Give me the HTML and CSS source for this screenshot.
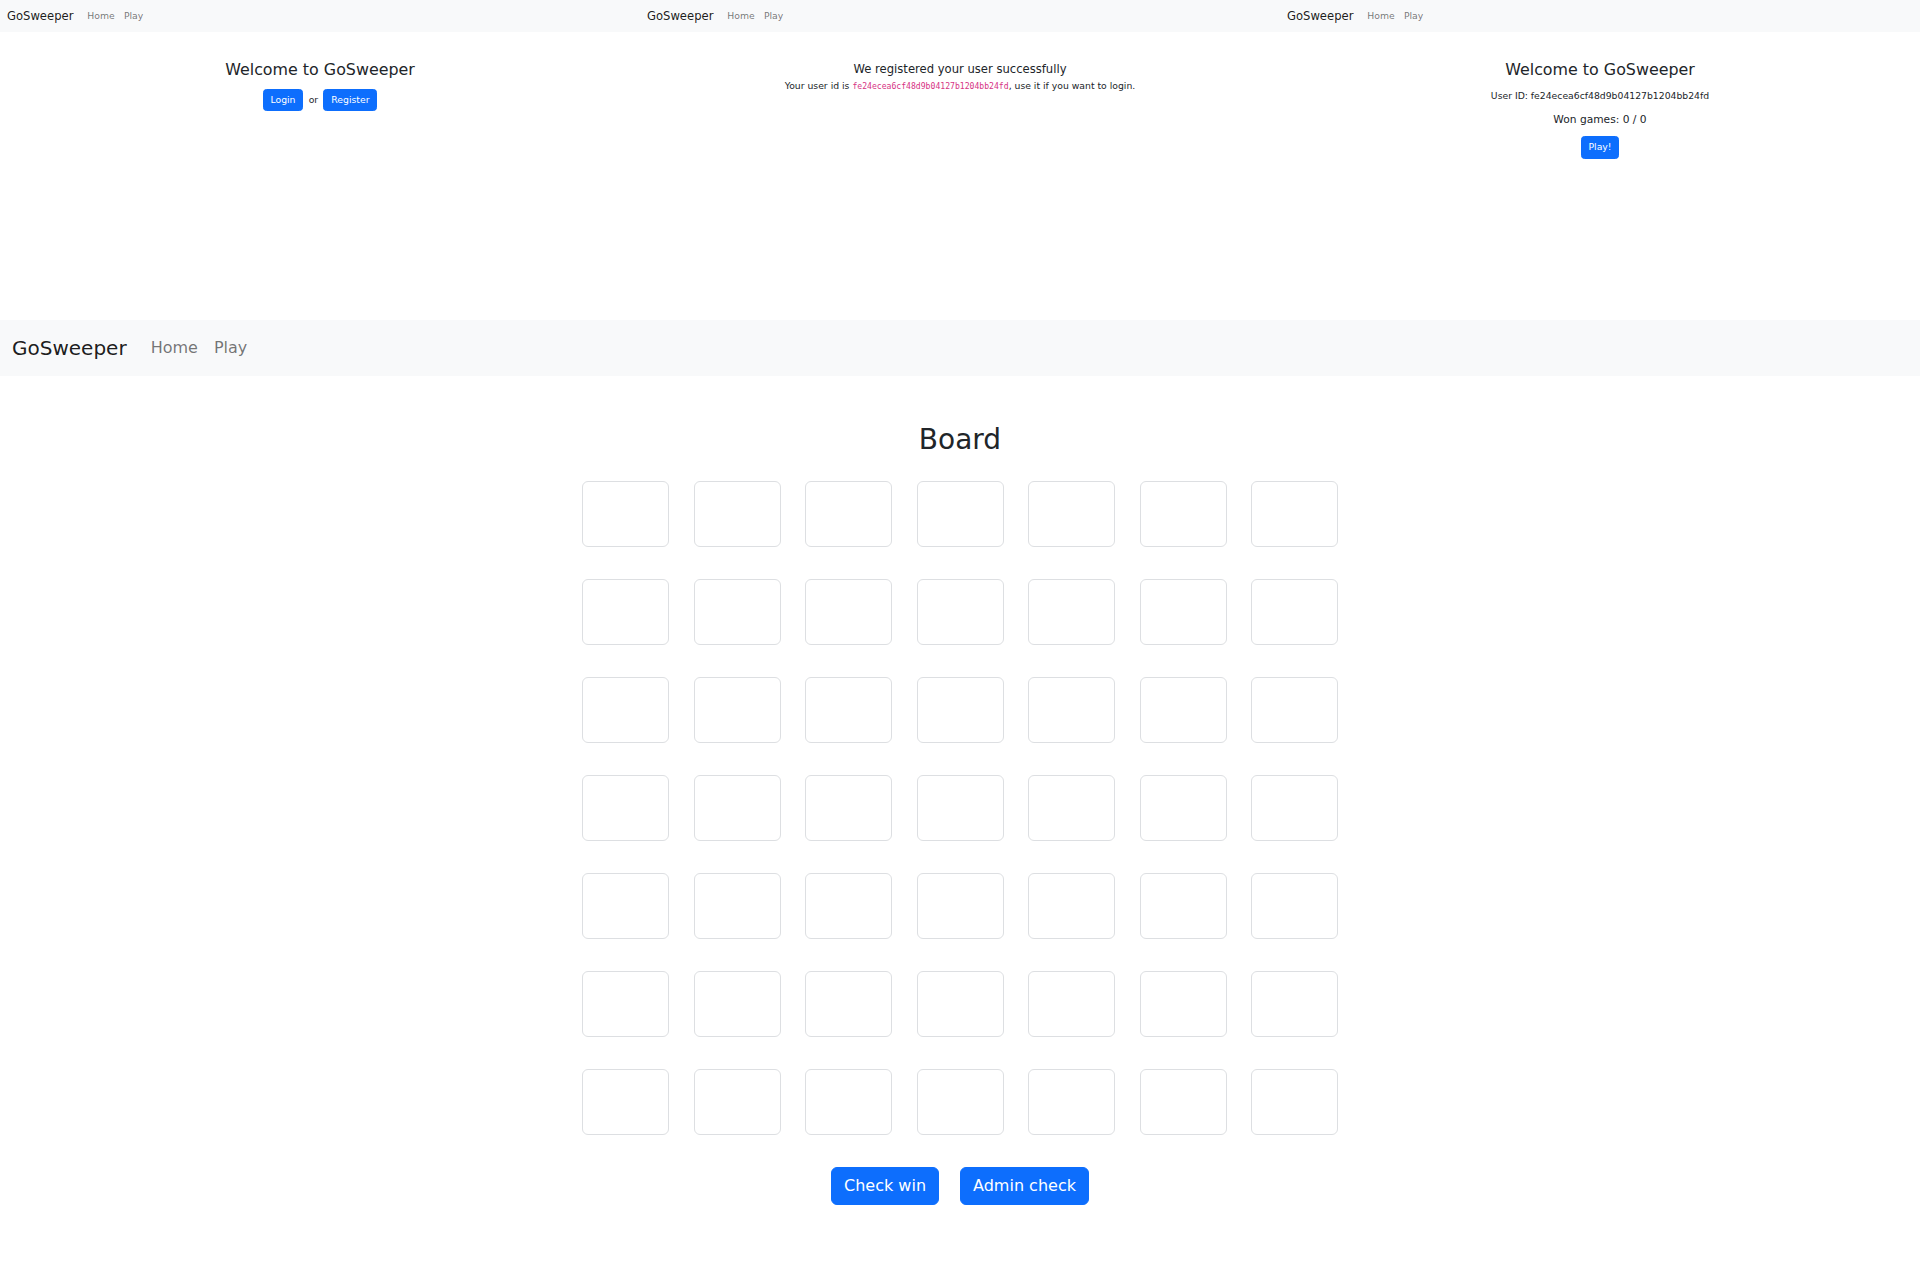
FILE: index.html
```html
<!DOCTYPE html>
<html lang="en">
<head>
<meta charset="utf-8">
<title>GoSweeper</title>
<link rel="stylesheet" href="styles.css">
</head>
<body>
<div class="shots">
  <div class="shot">
    <div class="page mini">
      <nav class="navbar">
        <span class="brand">GoSweeper</span>
        <a class="nav-link">Home</a>
        <a class="nav-link">Play</a>
      </nav>
      <div class="content">
        <h3 class="title mini-title">Welcome to GoSweeper</h3>
        <div class="auth">
          <a class="btn">Login</a>
          <span>or</span>
          <a class="btn">Register</a>
        </div>
      </div>
    </div>
  </div>
  <div class="shot">
    <div class="page mini">
      <nav class="navbar">
        <span class="brand">GoSweeper</span>
        <a class="nav-link">Home</a>
        <a class="nav-link">Play</a>
      </nav>
      <div class="content reg-content">
        <h5 class="subtitle">We registered your user successfully</h5>
        <p class="line">Your user id is <code>fe24ecea6cf48d9b04127b1204bb24fd</code>, use it if you want to login.</p>
      </div>
    </div>
  </div>
  <div class="shot">
    <div class="page mini">
      <nav class="navbar">
        <span class="brand">GoSweeper</span>
        <a class="nav-link">Home</a>
        <a class="nav-link">Play</a>
      </nav>
      <div class="content">
        <h3 class="title mini-title">Welcome to GoSweeper</h3>
        <p class="line">User ID: fe24ecea6cf48d9b04127b1204bb24fd</p>
        <p class="line won">Won games: 0 / 0</p>
        <a class="btn">Play!</a>
      </div>
    </div>
  </div>
</div>

<div class="page main">
  <nav class="navbar">
    <span class="brand">GoSweeper</span>
    <a class="nav-link">Home</a>
    <a class="nav-link">Play</a>
  </nav>
  <div class="content board-content">
    <h3 class="title board-title">Board</h3>
    <div class="grid">
      <div class="cell"></div><div class="cell"></div><div class="cell"></div><div class="cell"></div><div class="cell"></div><div class="cell"></div><div class="cell"></div>
      <div class="cell"></div><div class="cell"></div><div class="cell"></div><div class="cell"></div><div class="cell"></div><div class="cell"></div><div class="cell"></div>
      <div class="cell"></div><div class="cell"></div><div class="cell"></div><div class="cell"></div><div class="cell"></div><div class="cell"></div><div class="cell"></div>
      <div class="cell"></div><div class="cell"></div><div class="cell"></div><div class="cell"></div><div class="cell"></div><div class="cell"></div><div class="cell"></div>
      <div class="cell"></div><div class="cell"></div><div class="cell"></div><div class="cell"></div><div class="cell"></div><div class="cell"></div><div class="cell"></div>
      <div class="cell"></div><div class="cell"></div><div class="cell"></div><div class="cell"></div><div class="cell"></div><div class="cell"></div><div class="cell"></div>
      <div class="cell"></div><div class="cell"></div><div class="cell"></div><div class="cell"></div><div class="cell"></div><div class="cell"></div><div class="cell"></div>
    </div>
    <div class="actions">
      <a class="btn">Check win</a>
      <a class="btn">Admin check</a>
    </div>
  </div>
</div>
</body>
</html>
```

FILE: styles.css
```css
* { box-sizing: border-box; }

html, body {
  margin: 0;
  padding: 0;
  background: #fff;
}

body {
  font-family: "DejaVu Sans", "Liberation Sans", sans-serif;
  font-size: 16px;
  line-height: 1.5;
  color: #212529;
}

.shots {
  display: flex;
  height: 320px;
}

.shot {
  width: 640px;
  height: 320px;
  overflow: hidden;
}

.shot .page {
  zoom: 0.58;
}

.navbar {
  display: flex;
  align-items: center;
  background: #f8f9fa;
  padding: 8px 12px;
}

.brand {
  font-size: 20px;
  line-height: 30px;
  padding: 5px 0;
  margin-right: 16px;
  color: rgba(0, 0, 0, 0.9);
}

.nav-link {
  padding: 8px;
  font-size: 16px;
  line-height: 24px;
  color: rgba(0, 0, 0, 0.55);
}

.content {
  margin-top: 48px;
  text-align: center;
}

.reg-content {
  margin-top: 52px;
}

.board-content {
  margin-top: 47px;
}

.title {
  font-weight: 500;
  line-height: 1.2;
  margin: 0 0 16px;
}

.mini-title {
  font-size: 27.4px;
}

.board-title {
  font-size: 28px;
  margin-bottom: 24.4px;
}

.subtitle {
  font-size: 20px;
  font-weight: 500;
  line-height: 1.2;
  margin: 0 0 4px;
}

.line {
  margin: 0 0 16px;
}

.won {
  font-size: 18.4px;
  margin-bottom: 14px;
}

code {
  font-family: "DejaVu Sans Mono", "Liberation Mono", monospace;
  font-size: 0.875em;
  color: #d63384;
}

.auth {
  display: flex;
  justify-content: center;
  align-items: center;
  gap: 9px;
}

.btn {
  display: inline-block;
  padding: 6px 12px;
  font-size: 16px;
  line-height: 24px;
  color: #fff;
  background: #0d6efd;
  border: 1px solid #0d6efd;
  border-radius: 6px;
  text-decoration: none;
}

.grid {
  display: grid;
  grid-template-columns: repeat(7, 87px);
  column-gap: 24.5px;
  row-gap: 32px;
  justify-content: center;
}

.cell {
  height: 66px;
  border: 1px solid #dddfe2;
  border-radius: 6px;
  background: #fff;
}

.actions {
  display: flex;
  justify-content: center;
  gap: 21px;
  margin-top: 32px;
}
```
